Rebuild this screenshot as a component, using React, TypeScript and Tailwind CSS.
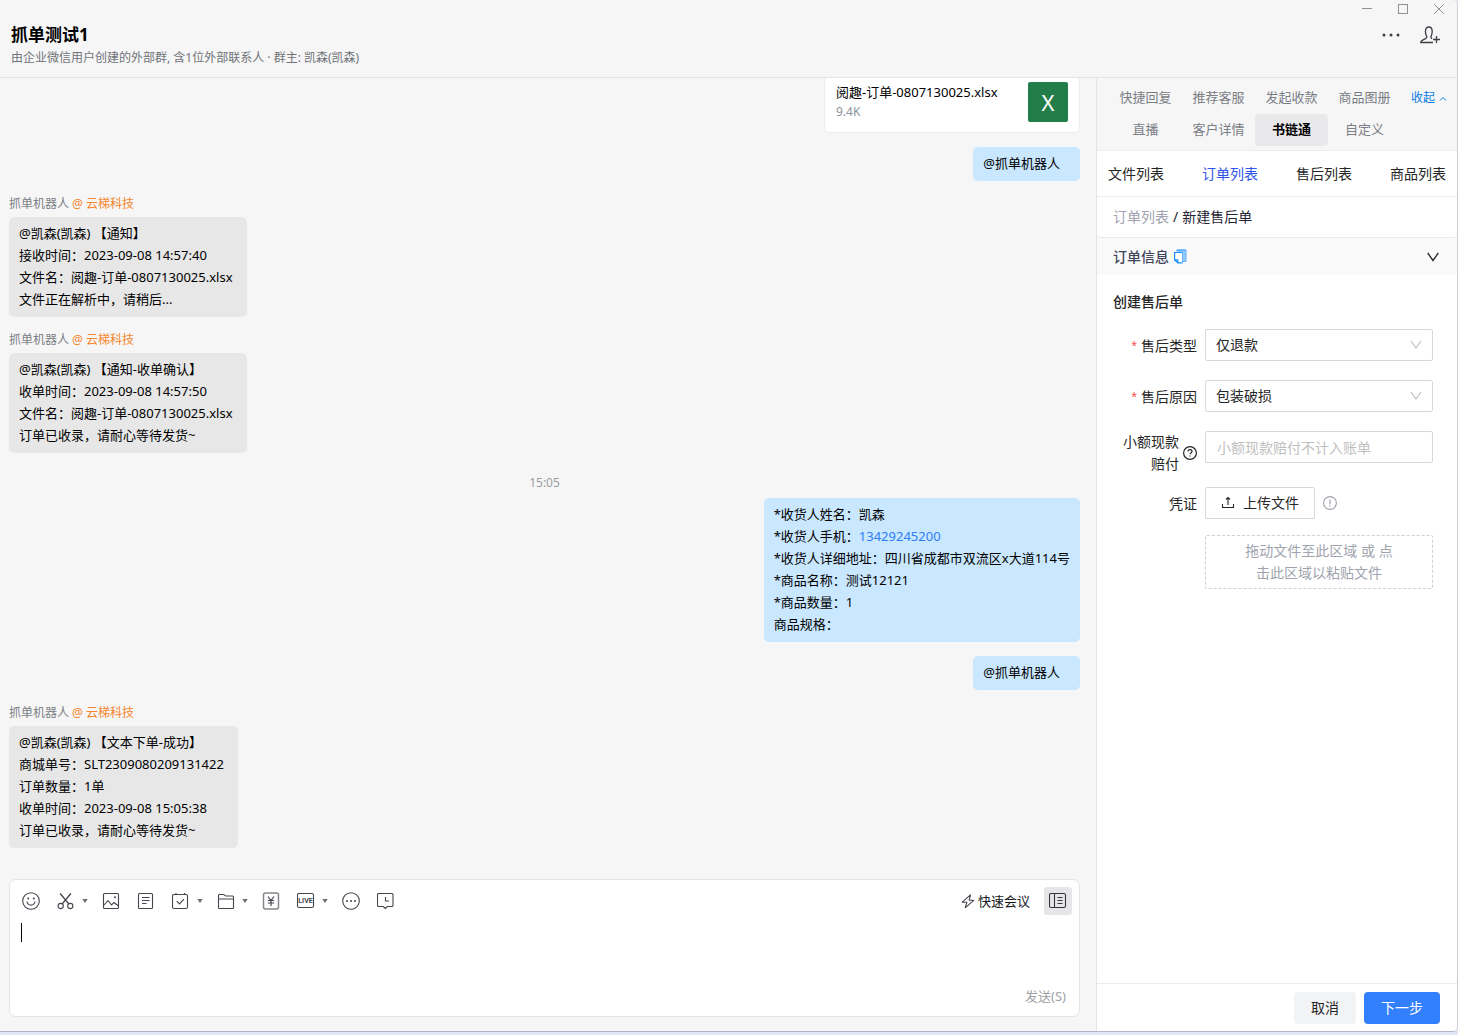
import React from "react";

const FONT = "font-['Noto_Sans','Noto_Sans_CJK_SC',sans-serif]";

type IconProps = { children: React.ReactNode; className?: string; size?: number };

function Icon({ children, className = "", size = 18 }: IconProps) {
  return (
    <svg
      width={size}
      height={size}
      viewBox={`0 0 ${size} ${size}`}
      fill="none"
      stroke="currentColor"
      strokeWidth="1.1"
      aria-hidden="true"
      className={`block shrink-0 ${className}`}
    >
      {children}
    </svg>
  );
}

function Header() {
  return (
    <header className="flex h-[78px] shrink-0 justify-between border-b border-[#e4e4e6] bg-[#f6f6f6]">
      <div className="pt-[23px] pl-[11px]">
        <h1 className="text-[17px] leading-6 font-bold text-black">抓单测试1</h1>
        <p className="text-xs leading-[22px] text-[#707379]">
          由企业微信用户创建的外部群, 含1位外部联系人 · 群主: 凯森(凯森)
        </p>
      </div>
      <div className="flex flex-col items-end">
        <div className="flex h-[18px] items-center gap-[26px] pr-[13px] text-[#8f9196]">
          <button type="button" aria-label="最小化">
            <Icon size={10}><path d="M0 4.5h10" strokeWidth="1" /></Icon>
          </button>
          <button type="button" aria-label="最大化">
            <Icon size={10}><rect x="0.5" y="0.5" width="9" height="9" strokeWidth="1" /></Icon>
          </button>
          <button type="button" aria-label="关闭">
            <Icon size={10}><path d="M0.3 0.3l9.4 9.4M9.7 0.3L0.3 9.7" strokeWidth="1" /></Icon>
          </button>
        </div>
        <div className="flex h-[34px] items-center gap-5 pr-[17px] text-[#3c3f46]">
          <button type="button" aria-label="更多">
            <Icon size={18}>
              <g fill="currentColor" stroke="none">
                <circle cx="2" cy="9" r="1.5" />
                <circle cx="9" cy="9" r="1.5" />
                <circle cx="16" cy="9" r="1.5" />
              </g>
            </Icon>
          </button>
          <button type="button" aria-label="添加成员">
            <Icon size={20}>
              <path
                d="M13 17.5H.8c0-1.600 1.100-2.300 2.800-2.900 1.700-.6 3.200-1.200 3.200-2.500 0-1.100-1.400-2.400-1.400-5.600C5.400 3.600 6.700 2 8.800 2s3.400 1.600 3.400 4.500c0 3.200-1.300 4.500-1.300 5.600 0 .8.500 1.300 1.200 1.700"
                strokeWidth="1.3"
              />
              <path d="M16.500 11v7M13 14.500h7" strokeWidth="1.3" />
            </Icon>
          </button>
        </div>
      </div>
    </header>
  );
}

function Incoming({ lines }: { lines: string[] }) {
  return (
    <article className="mt-[15px] flex flex-col items-start">
      <div className="mb-[5px] text-xs leading-4 text-[#7b7e85]">
        抓单机器人<span className="pl-[3px] text-[#f5862e]">@ 云梯科技</span>
      </div>
      <div className="rounded-[5px] bg-[#e7e7e7] pt-[5px] pr-3.5 pb-[7px] pl-2.5 text-[13px] leading-[22px] text-black">
        {lines.map((l) => (
          <p key={l}>{l}</p>
        ))}
      </div>
    </article>
  );
}

function Outgoing({ children, className = "" }: { children: React.ReactNode; className?: string }) {
  return (
    <article className="flex justify-end">
      <div
        className={`rounded-[5px] bg-[#c9e7ff] pt-[5px] pb-[7px] pl-2.5 text-[13px] leading-[22px] text-black ${className}`}
      >
        {children}
      </div>
    </article>
  );
}

function Messages() {
  return (
    <section className="flex min-h-0 flex-1 flex-col justify-end overflow-hidden pr-4 pb-[31px] pl-[9px]">
      <div className="flex justify-end">
        <div className="flex w-[256px] items-start justify-between rounded-[5px] border border-[#ececee] bg-white px-[11px] py-2.5">
          <div>
            <p className="text-[13px] leading-5 text-black">阅趣-订单-0807130025.xlsx</p>
            <p className="text-xs leading-5 text-[#8d939c]">9.4K</p>
          </div>
          <span className="grid size-10 place-items-center rounded-[2px] bg-[#237d49] text-[22px] leading-none text-white">
            X
          </span>
        </div>
      </div>
      <div className="mt-3.5">
        <Outgoing className="pr-5">@抓单机器人</Outgoing>
      </div>
      <Incoming
        lines={[
          "@凯森(凯森) 【通知】",
          "接收时间：2023-09-08 14:57:40",
          "文件名：阅趣-订单-0807130025.xlsx",
          "文件正在解析中，请稍后...",
        ]}
      />
      <Incoming
        lines={[
          "@凯森(凯森) 【通知-收单确认】",
          "收单时间：2023-09-08 14:57:50",
          "文件名：阅趣-订单-0807130025.xlsx",
          "订单已收录，请耐心等待发货~",
        ]}
      />
      <time className="mt-[21px] mb-1.5 block text-center text-xs leading-[18px] text-[#9a9da3]">15:05</time>
      <Outgoing className="pr-2.5">
        <p>*收货人姓名：凯森</p>
        <p>
          *收货人手机：
          <a href="tel:13429245200" className="text-[#2f7df6]">13429245200</a>
        </p>
        <p>*收货人详细地址：四川省成都市双流区x大道114号</p>
        <p>*商品名称：测试12121</p>
        <p>*商品数量：1</p>
        <p>商品规格：</p>
      </Outgoing>
      <div className="mt-3.5">
        <Outgoing className="pr-5">@抓单机器人</Outgoing>
      </div>
      <Incoming
        lines={[
          "@凯森(凯森) 【文本下单-成功】",
          "商城单号：SLT2309080209131422",
          "订单数量：1单",
          "收单时间：2023-09-08 15:05:38",
          "订单已收录，请耐心等待发货~",
        ]}
      />
    </section>
  );
}

function Tool({ label, menu, children }: { label: string; menu?: boolean; children: React.ReactNode }) {
  return (
    <button
      type="button"
      aria-label={label}
      className={`flex items-center gap-[7px] text-[#43464d] ${menu ? "mr-3.5" : "mr-[17px]"}`}
    >
      <Icon>{children}</Icon>
      {menu && (
        <svg width="6" height="4" viewBox="0 0 6 4" aria-hidden="true" className="text-[#6b6e74]">
          <path d="M0.300 0h5.400L3 4z" fill="currentColor" />
        </svg>
      )}
    </button>
  );
}

function Composer() {
  return (
    <section className="mr-4 mb-3.5 ml-[9px] flex h-[138px] shrink-0 flex-col rounded-[7px] border border-[#e4e4e6] bg-white">
      <div className="flex h-[42px] shrink-0 items-center justify-between pr-[7px] pl-3">
        <div className="flex items-center">
          <Tool label="表情">
            <circle cx="9" cy="9" r="8.300" />
            <path d="M5 9.500c.3 2.200 1.900 3.600 4 3.600s3.700-1.400 4-3.600" />
            <g fill="currentColor" stroke="none">
              <circle cx="6.200" cy="6.500" r="1" />
              <circle cx="11.800" cy="6.500" r="1" />
            </g>
          </Tool>
          <Tool label="截图" menu>
            <circle cx="3.700" cy="14" r="2.600" />
            <circle cx="13.300" cy="14" r="2.600" />
            <path d="M3.100 1.500l8.700 10.400M13.900 1.500L5.200 11.900" strokeWidth="1.400" />
          </Tool>
          <Tool label="图片">
            <rect x="1.500" y="1.500" width="15" height="15" rx="1" />
            <path d="M1.500 13.500l4.500-5 3.500 4.500 2.500-2.500 4.500 3.500" />
            <circle cx="13" cy="5.200" r="1" fill="currentColor" stroke="none" />
          </Tool>
          <Tool label="文档">
            <rect x="1.500" y="1.500" width="14" height="15" rx="1" />
            <path d="M5 5.500h7.500M5 8.500h7.500M5 11.500h4.500" />
          </Tool>
          <Tool label="待办" menu>
            <rect x="0.500" y="2.500" width="15" height="14" rx="1.500" />
            <path d="M4.700 9.200l2.800 2.800 4.500-4.800M4 1v1.500M12.500 1v1.500" />
          </Tool>
          <Tool label="文件" menu>
            <path d="M1.500 15.500v-12c0-.7.400-1 1-1h4c.8 0 1.500 1.500 2.500 1.500h6.500c.6 0 1 .3 1 1v10.500c0 .7-.4 1-1 1h-13c-.6 0-1-.3-1-1zM1.500 7h15" />
          </Tool>
          <Tool label="红包">
            <rect x="1.500" y="1" width="15" height="16" rx="2" stroke="#85878c" strokeWidth="1.500" />
            <path d="M6 4.500l3 4 3-4M9 8.500v5.500M5.800 8.500h6.400M5.800 11h6.400" strokeWidth="1.200" />
          </Tool>
          <Tool label="直播" menu>
            <rect x="0.500" y="1.500" width="16" height="14" rx="1.500" />
            <text
              x="8.500"
              y="11"
              textAnchor="middle"
              fill="currentColor"
              stroke="none"
              className="font-['Roboto',sans-serif] text-[7px] font-bold"
            >
              LIVE
            </text>
          </Tool>
          <Tool label="更多">
            <circle cx="9" cy="9" r="8.300" />
            <g fill="currentColor" stroke="none">
              <circle cx="5" cy="9" r="1" />
              <circle cx="9" cy="9" r="1" />
              <circle cx="13" cy="9" r="1" />
            </g>
          </Tool>
          <Tool label="聊天记录">
            <path d="M.5 2.500c0-.6.400-1 1-1h13.500c.6 0 1 .4 1 1v11c0 .6-.4 1-1 1h-4.700l-2 2-2-2H1.500c-.6 0-1-.4-1-1zM8.500 5v4h3.500" />
          </Tool>
        </div>
        <div className="flex items-center gap-3.5">
          <button type="button" className="flex items-center gap-[3px] text-[13px] leading-5 text-[#16181c]">
            <Icon size={14} className="text-[#43464d]">
              <path d="M9.500 0.800L1.300 8.200h4.600L4.200 13.800l8.500-7.500H8.200z" strokeLinejoin="round" />
            </Icon>
            快速会议
          </button>
          <button
            type="button"
            aria-label="侧边栏"
            className="grid size-7 place-items-center rounded-[3px] bg-[#e6e6e8] text-[#33363c]"
          >
            <Icon>
              <rect x="0.500" y="1.500" width="16" height="14" rx="1.500" />
              <path d="M5.500 1.500v14M8.500 5.500h5M8.500 8.500h5M8.500 11.500h5" />
            </Icon>
          </button>
        </div>
      </div>
      <div className="flex min-h-0 flex-1 items-start pl-[11px]">
        <span className="mt-px h-[19px] w-px bg-black" />
        <textarea
          aria-label="消息"
          className="h-full flex-1 resize-none bg-transparent text-[13px] leading-5 outline-none"
        />
      </div>
      <div className="flex justify-end pr-[13px] pb-[9px]">
        <button type="button" className="text-[13px] leading-[22px] text-[#a0a2a6]">发送(S)</button>
      </div>
    </section>
  );
}

const apps = ["快捷回复", "推荐客服", "发起收款", "商品图册", "直播", "客户详情", "书链通", "自定义"];
const lists = ["文件列表", "订单列表", "售后列表", "商品列表"];

function SelectBox({ id, value }: { id: string; value: string }) {
  return (
    <div className="relative">
      <select
        id={id}
        className="block h-8 w-full appearance-none rounded-[2px] border border-[#d9d9d9] bg-white px-2.5 text-sm text-[#262626] outline-none"
      >
        <option>{value}</option>
      </select>
      <svg
        width="12"
        height="10"
        viewBox="0 0 12 10"
        fill="none"
        stroke="#bfbfbf"
        strokeWidth="1.200"
        aria-hidden="true"
        className="pointer-events-none absolute top-[11px] right-[11px]"
      >
        <path d="M1 1l5 7 5-7" />
      </svg>
    </div>
  );
}

function Label({ htmlFor, required, children }: { htmlFor: string; required?: boolean; children: React.ReactNode }) {
  return (
    <label htmlFor={htmlFor} className="flex h-8 items-center justify-end gap-1 pt-px text-sm text-[#262626]">
      {required && <span className="font-['Liberation_Sans',sans-serif] text-[#ff4d4f]">*</span>}
      {children}
    </label>
  );
}

function Sidebar() {
  return (
    <aside className="flex w-[361px] shrink-0 flex-col border-l border-[#e4e4e6] bg-white">
      <div className="flex border-b border-[#ececee] bg-[#f6f6f6] pt-1 pb-1 pl-3">
        <nav className="grid grid-cols-[repeat(4,73px)]">
          {apps.map((a) => (
            <button
              key={a}
              type="button"
              className={`h-8 rounded-[4px] text-[13px] ${
                a === "书链通" ? "bg-[#e9e9eb] font-bold text-black" : "text-[#7b7e85]"
              }`}
            >
              {a}
            </button>
          ))}
        </nav>
        <button type="button" className="ml-2.5 flex h-8 items-center gap-1 text-xs text-[#0a7be8]">
          收起
          <svg width="8" height="5" viewBox="0 0 8 5" fill="none" stroke="currentColor" aria-hidden="true">
            <path d="M1 4.500l3-3 3 3" />
          </svg>
        </button>
      </div>
      <nav className="flex h-[46px] items-center justify-between border-b border-[#ececee] px-[11px] text-sm">
        {lists.map((l) => (
          <a key={l} href={`#${l}`} className={l === "订单列表" ? "text-[#2f54eb]" : "text-[#262626]"}>
            {l}
          </a>
        ))}
      </nav>
      <div className="bg-[#fafafa]">
        <nav className="flex h-[41px] items-center gap-1 rounded-b-[4px] border-b border-[#e9e9eb] bg-white pl-4 text-sm text-[#1f2333]">
          <a href="#orders" className="text-[#a0a3ae]">订单列表</a>
          <span>/</span>
          <span>新建售后单</span>
        </nav>
        <div className="flex h-[37px] items-center justify-between pr-[18px] pl-4">
          <h2 className="flex items-center gap-[5px] text-sm font-medium text-[#42465a]">
            订单信息
            <svg width="13" height="15" viewBox="0 0 13 15" aria-hidden="true">
              <path d="M2.500 1h9.500v11.500H8.500V3.500h-6z" fill="#91caff" />
              <path d="M.600 3.500h7.900v10.400H3.800L.600 10.900z" fill="#fff" />
              <path
                d="M2.500 1h9.500M8.500 13.900H3.800L.600 10.900V3.500H8.500M.600 10.900h3.200v3"
                fill="none"
                stroke="#1890ff"
                strokeWidth="1.200"
              />
              <path d="M8.500 3.500v10.400M12 1v11.500H9" fill="none" stroke="#69b1ff" />
            </svg>
          </h2>
          <button type="button" aria-label="展开订单信息">
            <svg width="12" height="10" viewBox="0 0 12 10" fill="none" stroke="#262626" strokeWidth="1.300" aria-hidden="true">
              <path d="M0.700 1L6 8.500 11.300 1" />
            </svg>
          </button>
        </div>
      </div>
      <form className="flex-1 pr-6 pl-4" onSubmit={(e) => e.preventDefault()}>
        <h3 className="pt-4 pb-4 text-sm leading-[22px] font-medium text-[#262626]">创建售后单</h3>
        <div className="grid grid-cols-[84px_minmax(0,1fr)] gap-x-2">
          <Label htmlFor="type" required>售后类型</Label>
          <div className="mb-[19px]"><SelectBox id="type" value="仅退款" /></div>
          <Label htmlFor="reason" required>售后原因</Label>
          <div className="mb-[19px]"><SelectBox id="reason" value="包装破损" /></div>
          <label
            htmlFor="cash"
            className="flex h-11 items-center justify-end gap-1 text-right text-sm leading-[22px] text-[#262626]"
          >
            <span className="w-14">小额现款赔付</span>
            <Icon size={14}>
              <circle cx="7" cy="7" r="6.400" strokeWidth="1.200" />
              <path d="M5 5.600c0-1.200.9-1.900 2-1.900s2 .7 2 1.800c0 1.400-2 1.400-2 2.800" strokeWidth="1.200" />
              <path d="M7 9.400v1.200" strokeWidth="1.200" />
            </Icon>
          </label>
          <input
            id="cash"
            placeholder="小额现款赔付不计入账单"
            className="mb-6 h-8 w-full rounded-[2px] border border-[#d9d9d9] px-[11px] text-sm outline-none placeholder:text-[#bfbfbf]"
          />
          <Label htmlFor="proof">凭证</Label>
          <div className="flex items-center gap-2">
            <button
              id="proof"
              type="button"
              className="flex h-8 items-center gap-2 rounded-[2px] border border-[#d9d9d9] px-[15px] text-sm text-[#262626]"
            >
              <Icon size={14}>
                <path d="M1.500 8v3.500h11V8M7 9V1.500M5 3.500l2-2 2 2" />
              </Icon>
              上传文件
            </button>
            <Icon size={14} className="text-[#a0a3ae]">
              <circle cx="7" cy="7" r="6.400" />
              <path d="M7 3.500v4.700M7 9.300v1.300" strokeWidth="1.200" />
            </Icon>
          </div>
          <div className="col-start-2 mt-4 rounded-[2px] border border-dashed border-[#d0d0d0] px-9 py-1 text-center text-sm leading-[22px] text-[#a0a3ae]">
            拖动文件至此区域 或 点击此区域以粘贴文件
          </div>
        </div>
      </form>
      <footer className="flex h-12 items-center justify-end gap-2 border-t border-[#ececee] pr-[17px] text-sm">
        <button type="button" className="h-8 rounded-[4px] bg-[#f2f3f5] px-[17px] text-[#262626]">取消</button>
        <button type="button" className="h-8 rounded-[4px] bg-[#3380ff] px-[17px] text-white">下一步</button>
      </footer>
    </aside>
  );
}

export default function App() {
  return (
    <div className={`flex h-screen flex-col bg-[#dfe8f5] pb-[3px] ${FONT}`}>
      <div className="flex min-h-0 flex-1 flex-col overflow-hidden rounded-tr-[5px] rounded-br-[5px] border-r border-b border-r-[#cfd0d3] border-b-[#aeb6c8] bg-[#f6f6f6]">
        <Header />
        <div className="flex min-h-0 flex-1">
          <main className="flex min-w-0 flex-1 flex-col">
            <Messages />
            <Composer />
          </main>
          <Sidebar />
        </div>
      </div>
    </div>
  );
}
